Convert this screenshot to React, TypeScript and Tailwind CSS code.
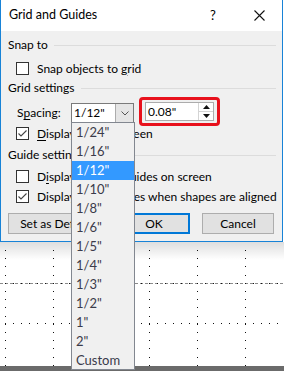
import React from "react";

const sizes = ['1/24"', '1/16"', '1/12"', '1/10"', '1/8"', '1/6"', '1/5"', '1/4"', '1/3"', '1/2"', '1"', '2"', "Custom"];

function Check({ checked }: { checked?: boolean }) {
  return (
    <span className="w-[13px] h-[13px] border border-[#333] bg-white flex items-center justify-center shrink-0">
      {checked && (
        <svg width="11" height="11" viewBox="0 0 11 11">
          <polyline points="1.5,5.5 4,8 9.5,2.5" fill="none" stroke="#444" strokeWidth="1.1" />
        </svg>
      )}
    </span>
  );
}

function Group({ label }: { label: string }) {
  return (
    <div className="h-[18px] flex items-center pl-[7px] pr-[6px]">
      <span>{label}</span>
      <span className="flex-1 h-px bg-[#dcdcdc] ml-[6px]" />
    </div>
  );
}

function Row({ children, checked, className }: { children: React.ReactNode; checked?: boolean; className?: string }) {
  return (
    <div className={"h-[19px] flex items-center pl-[15px] gap-[8px] whitespace-nowrap " + (className ?? "")}>
      <Check checked={checked} />
      <span>{children}</span>
    </div>
  );
}

function Canvas() {
  const dots: React.ReactNode[] = [];
  const cols = [5, 53, 101, 149, 197, 245];
  for (let i = 0; i < 16; i++) {
    const y = 8 + i * 8.2;
    cols.forEach((x) => dots.push(<rect key={`c${x}-${i}`} x={x} y={Math.round(y)} width="1" height="1" fill="#111" />));
  }
  for (let x = 5; x < 284; x += 8) {
    dots.push(<rect key={`r${x}`} x={x} y={81} width="1" height="1" fill="#111" />);
    dots.push(<rect key={`d${x}`} x={x} y={41} width="1" height="1" fill="#111" />);
  }
  return (
    <div className="relative h-[124px] bg-white">
      <svg width="284" height="124" className="absolute left-0 top-0">
        <line x1="0" y1="41.5" x2="284" y2="41.5" stroke="#8a8a8a" strokeDasharray="3 2" />
        {dots}
      </svg>
      <div className="absolute left-0 top-0 w-full h-[18px] bg-gradient-to-b from-[rgba(0,0,0,0.13)] to-transparent" />
    </div>
  );
}

export default function App() {
  return (
    <div className="relative w-[284px] h-[371px] overflow-hidden bg-white text-[12px] text-[#000] font-['Lato',sans-serif]">
      <div className="w-[283px] h-[242px] border-x border-b border-[#1883d7] bg-[#f0f0f0] flex flex-col">
        <div className="h-[31px] bg-white flex items-center pl-[8px] shrink-0">
          <span className="flex-1 text-[12.5px]">Grid and Guides</span>
          <span className="w-[10px] text-[13px] mr-[34px]">?</span>
          <svg width="11" height="11" viewBox="0 0 11 11" className="mr-[17px]">
            <path d="M0.5 0.5 L10.5 10.5 M10.5 0.5 L0.5 10.5" stroke="#111" strokeWidth="1.1" />
          </svg>
        </div>
        <div className="mt-[5px]">
          <Group label="Snap to" />
        </div>
        <Row className="mt-[5px]">
          Snap objects to <u className="underline-offset-2">g</u>rid
        </Row>
        <div className="mt-[1px]">
          <Group label="Grid settings" />
        </div>
        <div className="h-[27px] flex items-start pl-[16px]">
          <span className="w-[54px] mt-[6px] h-[20px] flex items-center">
            S<u className="underline-offset-2">p</u>acing:
          </span>
          <div className="mt-[6px] w-[63px] h-[20px] flex border border-[#7a7a7a] bg-white">
            <span className="flex-1 pl-[2px] flex items-center">1/12"</span>
            <span className="w-[18px] bg-[#e5e5e5] border-l border-[#acacac] flex items-center justify-center">
              <svg width="8" height="5" viewBox="0 0 8 5">
                <polyline points="0.5,0.5 4,4 7.5,0.5" fill="none" stroke="#555" strokeWidth="1" />
              </svg>
            </span>
          </div>
          <div className="ml-[5px] w-[81px] h-[29px] border-[3px] border-[#e8111c] rounded-[4px] flex items-center justify-center">
            <div className="w-[69px] h-[19px] border border-[#acacac] bg-white flex">
              <span className="flex-1 pl-[2px] flex items-center">0.08"</span>
              <span className="w-[15px] flex flex-col border-l border-[#d4d4d4]">
                <span className="flex-1 flex items-center justify-center border-b border-[#d4d4d4]">
                  <svg width="7" height="4" viewBox="0 0 7 4"><polygon points="0,4 3.5,0 7,4" fill="#111" /></svg>
                </span>
                <span className="flex-1 flex items-center justify-center">
                  <svg width="7" height="4" viewBox="0 0 7 4"><polygon points="0,0 3.5,4 7,0" fill="#111" /></svg>
                </span>
              </span>
            </div>
          </div>
        </div>
        <Row checked>
          <u className="underline-offset-2">D</u>isplay grid on screen
        </Row>
        <div className="mt-[3px]">
          <Group label="Guide settings" />
        </div>
        <Row className="mt-[3px]">
          D<u className="underline-offset-2">i</u>splay drawing guides on screen
        </Row>
        <Row checked className="mt-[1px]">
          Display smart guides when shapes are aligned
        </Row>
        <div className="mt-[7px] h-[21px] flex pl-[7px]">
          <div className="w-[98px] border border-[#adadad] bg-[#e1e1e1] flex items-center justify-center">
            Set as Def<u className="underline-offset-2">a</u>ult
          </div>
          <div className="ml-[12px] w-[72px] border-2 border-[#0078d7] bg-[#e1e1e1] flex items-center justify-center">OK</div>
          <div className="ml-[12px] w-[72px] border border-[#adadad] bg-[#e1e1e1] flex items-center justify-center">Cancel</div>
        </div>
      </div>
      <Canvas />
      <div className="h-[5px] bg-[#6b6b6b]" />
      <div className="absolute left-[71px] top-[122px] w-[64px] h-[248px] border border-[#828790] bg-[#f0f0f0] text-[13px] text-[#3b3b4a]">
        {sizes.map((s) => (
          <div
            key={s}
            className={"h-[19px] flex items-center pl-[4px] " + (s === '1/12"' ? "bg-[#3399ff] text-white" : "")}
          >
            {s}
          </div>
        ))}
      </div>
    </div>
  );
}
